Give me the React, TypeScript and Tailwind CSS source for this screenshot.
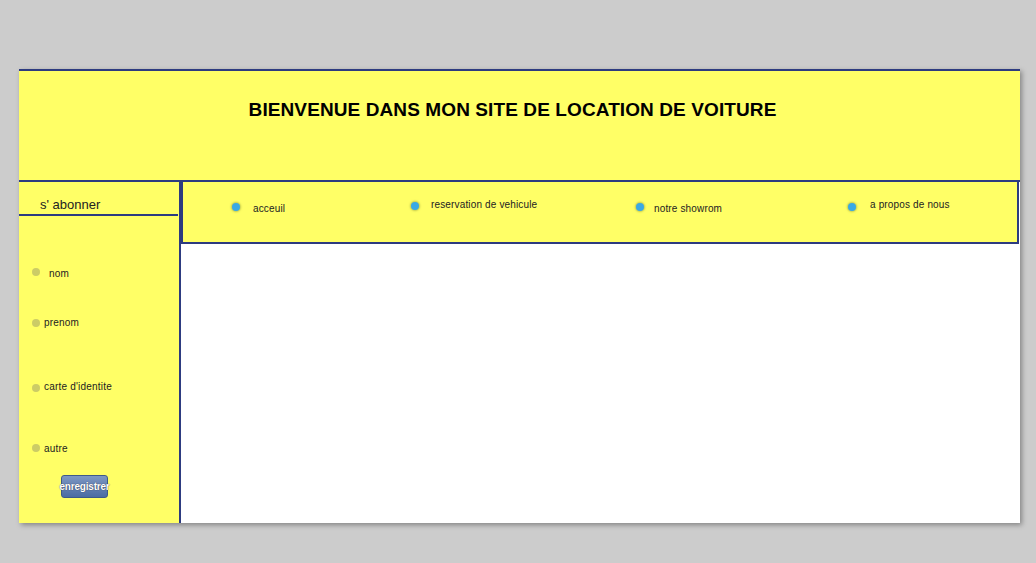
import React from 'react';

const navItems = [
  { label: 'acceuil', w: 'w-[179px]', dot: 'mt-[21px]', text: 'mt-[21px] ml-[13px]' },
  { label: 'reservation de vehicule', w: 'w-[225px]', dot: 'mt-[20px]', text: 'mt-[17px] ml-[12px]' },
  { label: 'notre showrom', w: 'w-[212px]', dot: 'mt-[21px]', text: 'mt-[21px] ml-[10px]' },
  { label: 'a propos de nous', w: 'w-[150px]', dot: 'mt-[21px]', text: 'mt-[17px] ml-[14px]' },
];

export default function App() {
  return (
    <div className="h-[563px] w-[1036px] bg-[#cccccc] pt-[69px] pl-[19px] font-['Liberation_Sans',Arial,sans-serif]">
      <div className="w-[1001px] h-[454px] bg-white border-t-2 border-[#2d3b80] shadow-[2px_2px_5px_rgba(0,0,0,0.35)] flex flex-col">
        {/* Header */}
        <div className="h-[109px] bg-[#ffff66] pt-[28px] pr-[14px] text-center">
          <h1 className="text-[19px] leading-[22px] font-bold text-black tracking-[0.1px]">
            BIENVENUE DANS MON SITE DE LOCATION DE VOITURE
          </h1>
        </div>

        <div className="flex flex-1 border-t-2 border-[#2d3b80]">
          {/* Sidebar */}
          <div className="w-[162px] bg-[#ffff66] border-r-2 border-[#2d3b80] flex flex-col">
            <div className="h-[34px] mr-[1px] border-b-2 border-[#2d3b80] pl-[21px] pt-[15px] text-[13px] leading-[16px] text-[#222]">
              s' abonner
            </div>

            <div className="mt-[48px] flex items-center h-[16px] pl-[13px]">
              <span className="w-2 h-2 rounded-full bg-[#cccc66]" />
              <span className="ml-[9px] mt-[2px] text-[10px] tracking-[0.2px] text-[#222]">nom</span>
            </div>
            <div className="mt-[35px] flex items-center h-[16px] pl-[13px]">
              <span className="w-2 h-2 rounded-full bg-[#cccc66]" />
              <span className="ml-[4px] -mt-[2px] text-[10px] tracking-[0.2px] text-[#222]">prenom</span>
            </div>
            <div className="mt-[49px] flex items-center h-[16px] pl-[13px]">
              <span className="w-2 h-2 rounded-full bg-[#cccc66]" />
              <span className="ml-[4px] -mt-[3px] text-[10px] tracking-[0.2px] text-[#222]">carte d'identite</span>
            </div>
            <div className="mt-[44px] flex items-center h-[16px] pl-[13px]">
              <span className="w-2 h-2 rounded-full bg-[#cccc66]" />
              <span className="ml-[4px] mt-[1px] text-[10px] tracking-[0.2px] text-[#222]">autre</span>
            </div>

            <div className="mt-[19px] ml-[42px]">
              <button className="w-[47px] h-[23px] rounded-[3px] border border-[#3e5a8a] bg-gradient-to-b from-[#7d97c2] to-[#4b6ca3] flex items-center justify-center overflow-visible">
                <span className="whitespace-nowrap text-[10px] font-bold text-white tracking-[-0.2px] [text-shadow:0_0_1px_#223]">
                  enregistrer
                </span>
              </button>
            </div>
          </div>

          {/* Main */}
          <div className="flex-1 flex flex-col bg-white">
            <div className="h-[62px] mr-[1px] bg-[#ffff66] border-l-2 border-r-2 border-b-2 border-[#2d3b80] flex pl-[49px]">
              {navItems.map((item) => (
                <div key={item.label} className={`${item.w} flex items-start`}>
                  <span className={`${item.dot} w-2 h-2 shrink-0 rounded-full bg-[#3aa9e4] shadow-[0_0_2px_1px_rgba(150,160,60,0.6)]`} />
                  <span className={`${item.text} text-[10px] leading-[12px] tracking-[0.15px] text-[#222] whitespace-nowrap`}>
                    {item.label}
                  </span>
                </div>
              ))}
            </div>
            <div className="flex-1" />
          </div>
        </div>
      </div>
    </div>
  );
}
